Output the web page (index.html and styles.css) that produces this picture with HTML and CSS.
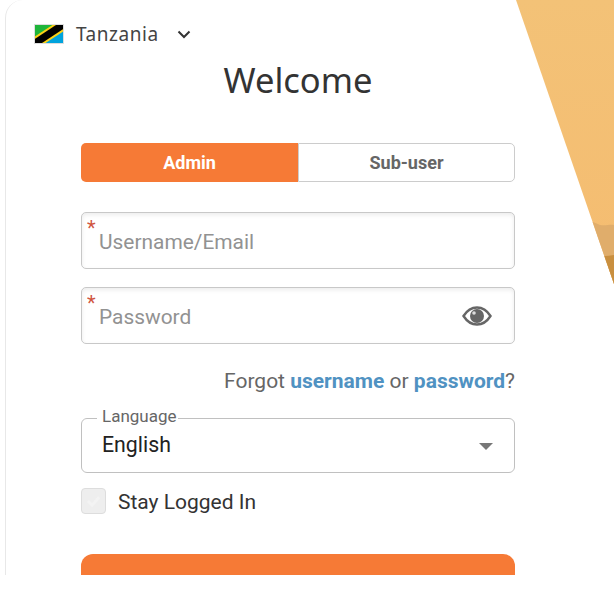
FILE: index.html
```html
<!DOCTYPE html>
<html lang="en">
<head>
<meta charset="utf-8">
<title>Login</title>
<link rel="stylesheet" href="styles.css">
</head>
<body>
<div class="viewport">
  <div class="desert">
    <svg class="desert-art" viewBox="0 0 98 284" preserveAspectRatio="none" aria-hidden="true">
      <defs>
        <clipPath id="wedge"><polygon points="0,0 98,0 98,284"/></clipPath>
        <linearGradient id="sky" x1="0" y1="0" x2="0" y2="1">
          <stop offset="0" stop-color="#f3c277"/>
          <stop offset="1" stop-color="#f5bc70"/>
        </linearGradient>
      </defs>
      <g clip-path="url(#wedge)">
        <rect width="98" height="284" fill="url(#sky)"/>
        <path d="M60 222C70 219 78 222 84 225C90 226 94 224 98 225V284H60Z" fill="#e0ad6b"/>
        <path d="M70 258C80 257 90 256 98 255V284H70Z" fill="#c98f3f"/>
      </g>
    </svg>
  </div>
  <main class="card">
    <button class="country" type="button">
      <svg class="flag" viewBox="0 0 30 20" aria-hidden="true">
        <rect width="30" height="20" fill="#1eb53a"/>
        <polygon points="30,0 30,20 0,20" fill="#00a3dd"/>
        <polygon points="0,20 0,13 20,0 30,0 30,7 10,20" fill="#fcd116"/>
        <polygon points="0,20 0,15.5 23.5,0 30,0 30,4.5 6.5,20" fill="#000"/>
        <rect x="0.5" y="0.5" width="29" height="19" fill="none" stroke="#ddd"/>
      </svg>
      <span class="country-name">Tanzania</span>
      <svg class="chev" viewBox="0 0 14 9" aria-hidden="true"><path d="M1.5 1.5 7 7l5.5-5.5" fill="none" stroke="#333" stroke-width="2"/></svg>
    </button>
    <h1 class="title">Welcome</h1>
    <div class="tabs">
      <button class="tab tab-on" type="button">Admin</button>
      <button class="tab tab-off" type="button">Sub-user</button>
    </div>
    <div class="input first"><span class="req">*</span><span class="ph">Username/Email</span></div>
    <div class="input"><span class="req">*</span><span class="ph">Password</span>
      <svg class="eye" viewBox="0 0 30 22" aria-hidden="true">
        <path d="M1.5 11C5 5.500 9.500 2.500 15 2.500S25 5.500 28.500 11C25 16.500 20.500 19.500 15 19.500S5 16.500 1.500 11Z" fill="none" stroke="#666" stroke-width="2.400"/>
        <circle cx="15" cy="11" r="7" fill="#666"/>
        <circle cx="12" cy="8" r="1.800" fill="#ddd"/>
      </svg>
    </div>
    <p class="forgot">Forgot <a href="#">username</a> or <a href="#">password</a>?</p>
    <fieldset class="lang">
      <legend>Language</legend>
      <span class="lang-value">English</span>
      <span class="caret"></span>
    </fieldset>
    <label class="stay">
      <span class="box"><svg viewBox="0 0 16 12" aria-hidden="true"><path d="M2 6l4.500 4.500L14 2" fill="none" stroke="#f3f3f3" stroke-width="3"/></svg></span>
      <span class="stay-text">Stay Logged In</span>
    </label>
    <button class="submit" type="button">Sign In</button>
  </main>
</div>
</body>
</html>
```
FILE: styles.css
```css
* { box-sizing: border-box; }
html, body { margin: 0; padding: 0; background: #fff; }
body { font-family: Roboto, "Liberation Sans", sans-serif; color: #333; }
button { font-family: inherit; }

.viewport {
  position: relative;
  width: 614px;
  height: 575px;
  overflow: hidden;
  background: #fff;
}
.desert {
  position: absolute;
  top: 0;
  right: 0;
  width: 98px;
  height: 284px;
}
.desert-art { display: block; width: 100%; height: 100%; }

.card {
  position: relative;
  width: 520px;
  height: 700px;
  margin-left: 5px;
  padding: 1px 0 0 75px;
  border-left: 1px solid #e8e8e8;
  border-top-left-radius: 18px;
  display: flex;
  flex-direction: column;
  align-items: flex-start;
}

.country {
  display: flex;
  align-items: center;
  margin: 23px 0 0 -47px;
  padding: 0;
  border: 0;
  background: none;
  color: #444;
  height: 20px;
}
.flag { width: 30px; height: 20px; display: block; }
.country-name {
  margin-left: 12px;
  font-family: "Noto Sans", sans-serif;
  font-size: 19px;
  letter-spacing: 0.55px;
}
.chev { width: 14px; height: 9px; margin-left: 18px; }

.title {
  align-self: flex-start;
  width: 434px;
  margin: 13px 0 0;
  text-align: center;
  font-family: "Noto Sans", sans-serif;
  font-size: 34.5px;
  line-height: 46px;
  font-weight: 400;
  color: #333;
}

.tabs { display: flex; width: 434px; height: 39px; margin-top: 40px; }
.tab {
  flex: 1 1 50%;
  font-size: 18px;
  font-weight: 700;
  padding: 0;
}
.tab-on { background: #f67a36; color: #fff; border: 0; border-radius: 5px 0 0 5px; }
.tab-off { background: #fff; color: #666; border: 1px solid #ccc; border-radius: 0 5px 5px 0; }

.input {
  position: relative;
  width: 434px;
  height: 57px;
  margin-top: 18px;
  display: flex;
  align-items: center;
  padding-left: 17px;
  background: #fff;
  border: 1px solid #c8c8c8;
  border-radius: 5px;
  box-shadow: inset 0 2px 4px rgba(0,0,0,0.08);
}
.first { margin-top: 30px; }
.req {
  position: absolute;
  left: 5px;
  top: 5px;
  color: #d0563f;
  font-size: 20px;
  line-height: 20px;
}
.ph { font-size: 20.9px; color: #929292; margin-top: 2px; }
.eye { position: absolute; right: 22px; top: 17px; width: 30px; height: 22px; }

.forgot {
  width: 434px;
  margin: 25px 0 0;
  text-align: right;
  font-size: 21px;
  line-height: 24px;
  color: #666;
}
.forgot a { color: #5092c2; font-weight: 700; text-decoration: none; }

.lang {
  position: relative;
  width: 434px;
  height: 66px;
  margin: 14px 0 0;
  padding: 0 0 0 15px;
  border: 1px solid #c0c0c0;
  border-radius: 6px;
  min-inline-size: 0;
}
.lang legend {
  padding: 0 1px 4px 5px;
  font-size: 17px;
  line-height: 18px;
  color: #666;
}
.lang-value { display: block; margin: 3px 0 0 5px; font-size: 21.3px; line-height: 26px; color: #222; }
.caret {
  position: absolute;
  right: 21px;
  top: 14px;
  border-left: 7.500px solid transparent;
  border-right: 7.500px solid transparent;
  border-top: 7.500px solid #777;
}

.stay { display: flex; align-items: center; margin-top: 15px; font-size: 21px; color: #333; }
.stay-text { margin-top: 2px; }
.box {
  width: 25px;
  height: 26px;
  margin-right: 12px;
  background: #eee;
  border: 1px solid #ddd;
  border-radius: 4px;
  display: flex;
  align-items: center;
  justify-content: center;
}
.box svg { width: 15px; height: 12px; }

.submit {
  width: 434px;
  height: 56px;
  margin-top: 40px;
  padding-top: 3px;
  background: #f67a36;
  border: 0;
  border-radius: 12px;
  color: #fff;
  font-size: 21px;
  font-weight: 700;
}
```
